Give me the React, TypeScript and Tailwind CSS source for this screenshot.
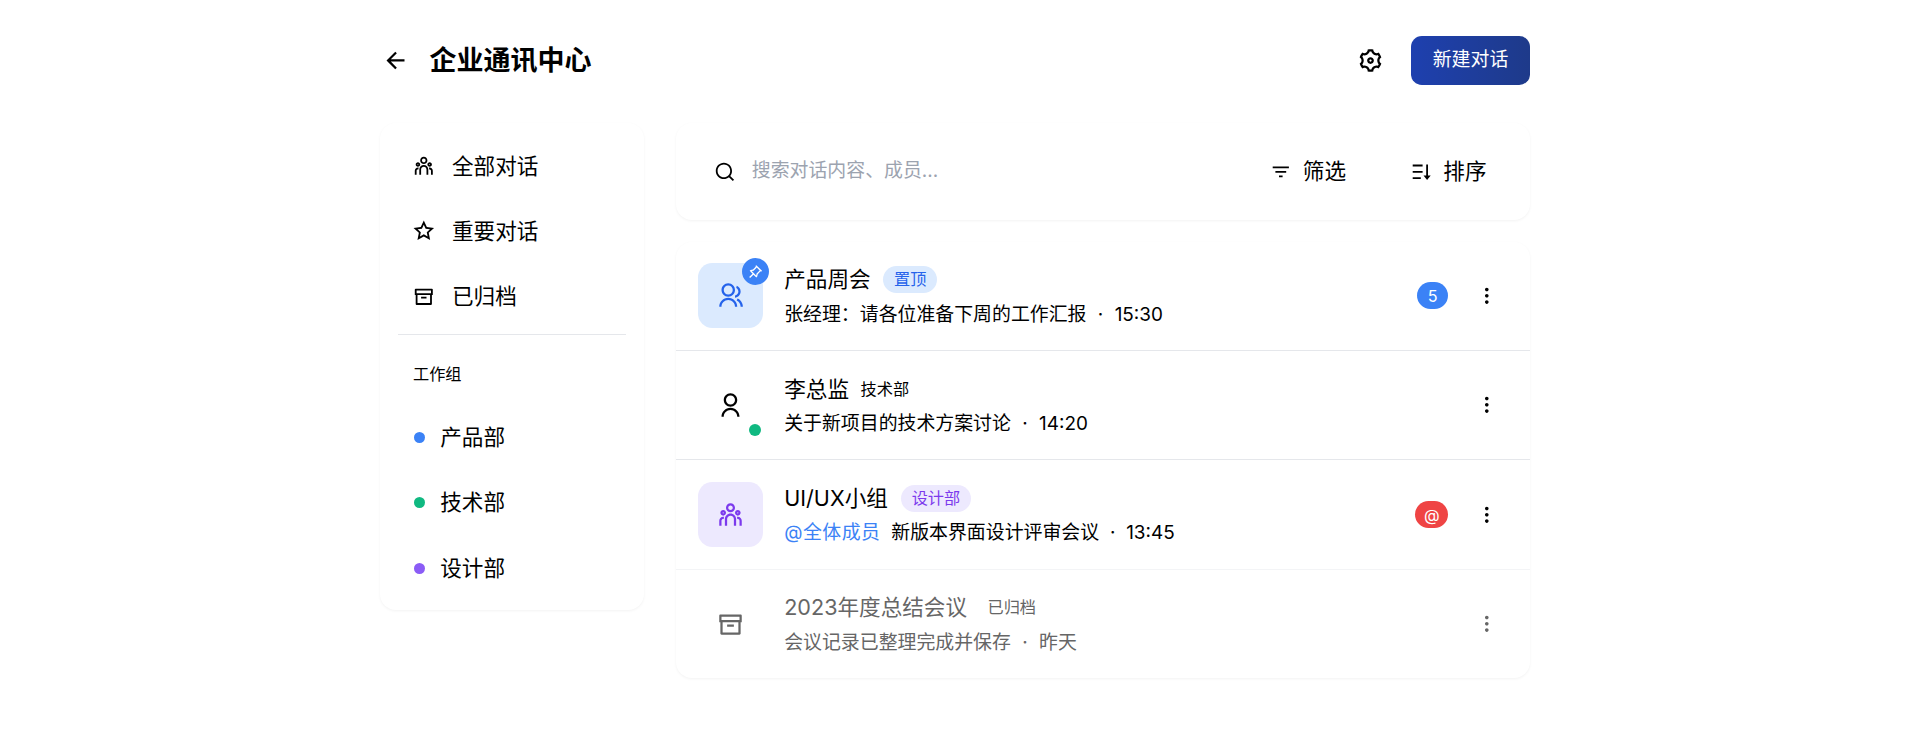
import React from 'react';
import {
  RiArrowLeftLine, RiSettings3Line, RiTeamLine, RiStarLine, RiArchiveLine, RiSearchLine,
  RiFilter3Line, RiSortDesc, RiPushpinLine, RiGroupLine, RiUserLine, RiMore2Fill,
} from 'react-icons/ri';

const font = "font-['Inter','Noto_Sans_CJK_SC',sans-serif]";

const NavItem = ({ icon, label }: { icon: React.ReactNode; label: string }) => (
  <div className="flex h-[65.4px] items-center gap-[17px] px-[33.4px] text-[21.6px] text-black">
    {icon}
    <span>{label}</span>
  </div>
);

const GroupItem = ({ dot, label }: { dot: string; label: string }) => (
  <div className="flex h-[65.4px] items-center gap-[15.2px] px-[34px] text-[21.6px] text-black">
    <span className={`h-[11px] w-[11px] rounded-full ${dot}`}></span>
    <span>{label}</span>
  </div>
);

const MoreButton = ({ muted }: { muted?: boolean }) => (
  <RiMore2Fill className={`h-[21.6px] w-[21.6px] ${muted ? 'text-[#666]' : 'text-black'}`} />
);

const Dot = () => <span className="mx-[10.8px]">·</span>;

export default function App() {
  return (
    <div className={`${font} min-h-[729px] bg-white`}>
      <div className="ml-[380px] w-[1150px] pt-9">
        <div className="flex h-[49px] items-center justify-between">
          <div className="flex items-center">
            <RiArrowLeftLine className="ml-[1.5px] h-[27px] w-[27px] text-black" />
            <h1 className="mt-[1px] ml-[21px] text-[27px] font-bold text-black">企业通讯中心</h1>
          </div>
          <div className="flex items-center gap-[27px]">
            <RiSettings3Line className="h-[27px] w-[27px] text-black" />
            <button className="flex h-[49px] w-[119px] items-center justify-center rounded-[10.8px] bg-gradient-to-r from-[#1e40af] to-[#1e3a8a] text-[18.9px] text-white">
              新建对话
            </button>
          </div>
        </div>

        <div className="mt-[38px] flex items-start gap-8">
          <aside className="w-[264px] rounded-2xl bg-white pt-[10px] pb-[9px] shadow-[0_1px_3px_rgba(0,0,0,0.05)]">
            <NavItem icon={<RiTeamLine className="h-[21.6px] w-[21.6px]" />} label="全部对话" />
            <NavItem icon={<RiStarLine className="h-[21.6px] w-[21.6px]" />} label="重要对话" />
            <NavItem icon={<RiArchiveLine className="h-[21.6px] w-[21.6px]" />} label="已归档" />
            <div className="mx-[18px] mt-[4.6px] h-px bg-[#e5e7eb]"></div>
            <div className="px-[33px] pt-[27.5px] pb-[18.3px] text-[16.2px] leading-[24px] text-black">工作组</div>
            <GroupItem dot="bg-[#3b82f6]" label="产品部" />
            <GroupItem dot="bg-[#10b981]" label="技术部" />
            <GroupItem dot="bg-[#8b5cf6]" label="设计部" />
          </aside>

          <main className="flex-1">
            <div className="flex h-[97px] items-center rounded-2xl bg-white pr-[43.5px] pl-[38px] shadow-[0_1px_3px_rgba(0,0,0,0.05)]">
              <RiSearchLine className="h-[21.6px] w-[21.6px] text-black" />
              <span className="ml-[16.2px] flex-1 text-[18.9px] text-[#9ca3af]">搜索对话内容、成员...</span>
              <div className="flex items-center gap-[11.7px] text-[21.6px] text-black">
                <RiFilter3Line className="h-[21.6px] w-[21.6px]" />
                <span>筛选</span>
              </div>
              <div className="ml-[64px] flex items-center gap-[11.7px] text-[21.6px] text-black">
                <RiSortDesc className="h-[21.6px] w-[21.6px]" />
                <span>排序</span>
              </div>
            </div>

            <div className="mt-[21.6px] rounded-2xl bg-white shadow-[0_1px_3px_rgba(0,0,0,0.05)]">
              <div className="flex items-center border-b border-[#e5e7eb] py-[21.1px] pr-[32px] pl-[21.6px]">
                <div className="relative flex h-[65px] w-[65px] items-center justify-center rounded-[14.4px] bg-[#dbeafe]">
                  <RiGroupLine className="h-[27px] w-[27px] text-[#2563eb]" />
                  <div className="absolute -top-[5px] -right-[6px] flex h-[27px] w-[27px] items-center justify-center rounded-full bg-[#3b82f6]">
                    <RiPushpinLine className="h-[16.2px] w-[16.2px] text-white" />
                  </div>
                </div>
                <div className="ml-[21.6px] flex-1">
                  <div className="flex items-center">
                    <span className="text-[21.6px] leading-[32.4px] text-black">产品周会</span>
                    <span className="mt-[1px] ml-[12.6px] rounded-full bg-[#dbeafe] px-[10.8px] text-[16.2px] leading-[27px] text-[#2563eb]">置顶</span>
                  </div>
                  <div className="mt-[5.5px] text-[18.9px] leading-[28.35px] text-black">
                    张经理：请各位准备下周的工作汇报<span className="mx-[11.4px]">·</span>15:30
                  </div>
                </div>
                <div className="mr-[28px] flex h-[27px] w-[31.6px] items-center justify-center rounded-full bg-[#3b82f6] text-[16.2px] text-white">5</div>
                <MoreButton />
              </div>

              <div className="flex items-center border-b border-[#e5e7eb] py-[21.6px] pr-[32px] pl-[21.6px]">
                <div className="relative flex h-[65px] w-[65px] items-center justify-center">
                  <RiUserLine className="h-[27px] w-[27px] text-black" />
                  <span className="absolute right-[2px] bottom-[2px] h-[12px] w-[12px] rounded-full bg-[#10b981]"></span>
                </div>
                <div className="ml-[21.6px] flex-1">
                  <div className="flex items-center">
                    <span className="text-[21.6px] leading-[32.4px] text-black">李总监</span>
                    <span className="mt-[1px] ml-[11.6px] text-[16.2px] leading-[27px] text-black">技术部</span>
                  </div>
                  <div className="mt-[4.5px] text-[18.9px] leading-[28.35px] text-black">
                    关于新项目的技术方案讨论<span className="mx-[11.4px]">·</span>14:20
                  </div>
                </div>
                <MoreButton />
              </div>

              <div className="flex items-center border-b border-[#f3f4f6] py-[21.1px] pr-[32px] pl-[21.6px]">
                <div className="flex h-[65px] w-[65px] items-center justify-center rounded-[14.4px] bg-[#ede9fe]">
                  <RiTeamLine className="h-[27px] w-[27px] text-[#7c3aed]" />
                </div>
                <div className="ml-[21.6px] flex-1">
                  <div className="flex items-center">
                    <span className="text-[21.6px] leading-[32.4px] text-black">UI/UX小组</span>
                    <span className="mt-[1px] ml-[13px] rounded-full bg-[#ede9fe] px-[10.8px] text-[16.2px] leading-[27px] text-[#7c3aed]">设计部</span>
                  </div>
                  <div className="mt-[5.5px] text-[18.9px] leading-[28.35px] text-black">
                    <span className="tracking-[0.5px] text-[#3b82f6]">@全体成员</span>
                    <span className="ml-[10.8px]">新版本界面设计评审会议<Dot />13:45</span>
                  </div>
                </div>
                <div className="mr-[28px] flex h-[27px] w-[33px] items-center justify-center rounded-full bg-[#ef4444] text-[16.2px] text-white">@</div>
                <MoreButton />
              </div>

              <div className="flex items-center py-[21.1px] pr-[32px] pl-[21.6px]">
                <div className="flex h-[65px] w-[65px] items-center justify-center">
                  <RiArchiveLine className="h-[27px] w-[27px] text-[#666]" />
                </div>
                <div className="ml-[21.6px] flex-1">
                  <div className="flex items-center">
                    <span className="text-[21.6px] leading-[32.4px] text-[#666]">2023年度总结会议</span>
                    <span className="mt-[1px] ml-[9.6px] px-[10.8px] text-[16.2px] leading-[27px] text-[#666]">已归档</span>
                  </div>
                  <div className="mt-[5.5px] text-[18.9px] leading-[28.35px] text-[#666]">
                    会议记录已整理完成并保存<span className="mx-[11.4px]">·</span>昨天
                  </div>
                </div>
                <MoreButton muted />
              </div>
            </div>
          </main>
        </div>
      </div>
    </div>
  );
}
